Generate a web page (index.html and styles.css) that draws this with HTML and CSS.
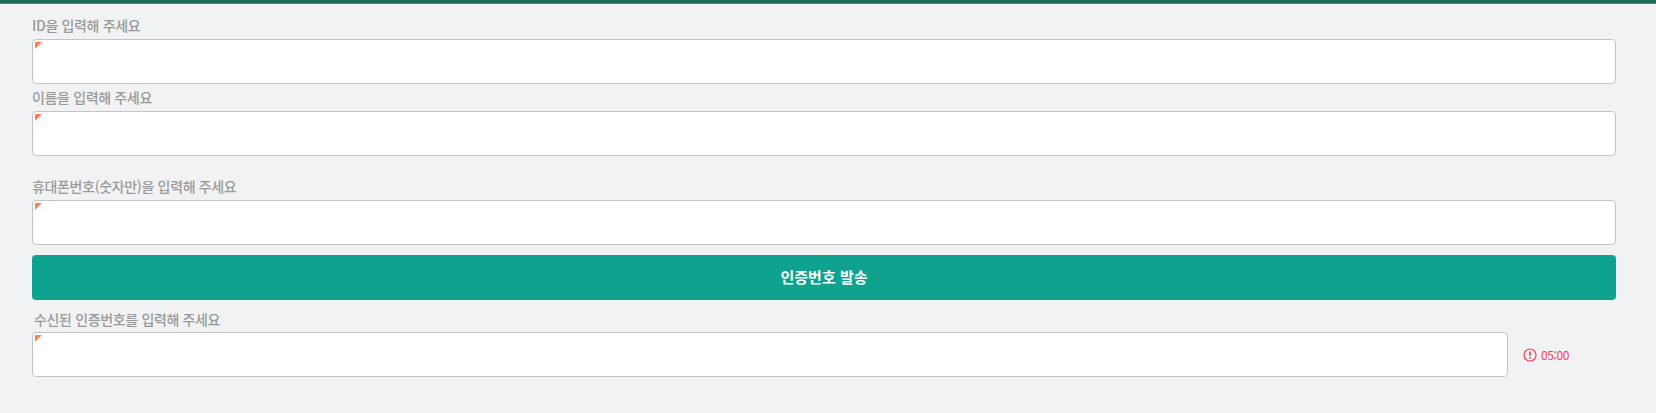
FILE: index.html
```html
<!DOCTYPE html>
<html lang="ko">
<head>
    <meta charset="UTF-8">
    <meta name="viewport" content="width=device-width, initial-scale=1.0">
    <title>인증번호 발송</title>
    <link rel="stylesheet" href="styles.css">
</head>
<body>
    <header class="top-bar"></header>
    <main class="form">
        <div class="field">
            <label class="field-label" for="user-id">ID을 입력해 주세요</label>
            <div class="input-box"><input type="text" id="user-id"></div>
        </div>
        <div class="field">
            <label class="field-label" for="user-name">이름을 입력해 주세요</label>
            <div class="input-box"><input type="text" id="user-name"></div>
        </div>
        <div class="field field-phone">
            <label class="field-label" for="user-phone">휴대폰번호(숫자만)을 입력해 주세요</label>
            <div class="input-box"><input type="text" id="user-phone"></div>
        </div>
        <button type="button" class="send-button">인증번호 발송</button>
        <div class="field">
            <label class="field-label field-label-code" for="user-code">수신된 인증번호를 입력해 주세요</label>
            <div class="code-row">
                <div class="input-box"><input type="text" id="user-code"></div>
                <div class="timer">
                    <svg class="timer-icon" viewBox="0 0 14 14" aria-hidden="true">
                        <circle cx="7" cy="7" r="6" fill="none" stroke="currentColor" stroke-width="1.2"/>
                        <path d="M7 3.6v4.2" fill="none" stroke="currentColor" stroke-width="1.7"/>
                        <path d="M7 9.1v1.5" fill="none" stroke="currentColor" stroke-width="1.7"/>
                    </svg>
                    <span>05:00</span>
                </div>
            </div>
        </div>
    </main>
</body>
</html>
```

FILE: styles.css
```css
body {
    font-family: "Noto Sans CJK KR", "Noto Sans", sans-serif;
    background-color: #f1f2f4;
    margin: 0;
    padding: 0;
}
.top-bar {
    height: 3px;
    background-color: #1f6b57;
    border-bottom: 1px solid #4d8a79;
}
.form {
    display: flex;
    flex-direction: column;
    padding: 10px 40px 0 32px;
}
.field-phone {
    margin-top: 17px;
}
.field-label {
    display: block;
    height: 25px;
    line-height: 22px;
    box-sizing: border-box;
    font-size: 14px;
    font-weight: 500;
    letter-spacing: -0.35px;
    color: #999999;
}
.field-label-code {
    padding-left: 2px;
}
.field + .field .field-label {
    height: 27px;
    padding-top: 2px;
}
.input-box {
    position: relative;
    flex: 1;
}
.input-box::before {
    content: "";
    position: absolute;
    top: 3px;
    left: 3px;
    border-top: 7px solid #ff7f50;
    border-right: 7px solid transparent;
}
.input-box input {
    display: block;
    width: 100%;
    height: 45px;
    box-sizing: border-box;
    border: 1px solid #c4c4c4;
    border-radius: 4px;
    background-color: #ffffff;
    outline: none;
}
.send-button {
    height: 45px;
    margin-top: 10px;
    padding-bottom: 3px;
    border: none;
    border-radius: 4px;
    background-color: #0fa38f;
    color: #ffffff;
    font-family: inherit;
    font-size: 15px;
    font-weight: 700;
    cursor: pointer;
}
.send-button + .field .field-label {
    height: 32px;
    padding-top: 8px;
}
.code-row {
    display: flex;
    align-items: center;
}
.timer {
    width: 108px;
    display: flex;
    align-items: center;
    gap: 4px;
    padding-left: 15px;
    box-sizing: border-box;
    color: #ff3b4e;
    font-size: 12px;
    letter-spacing: -0.4px;
}
.timer-icon {
    width: 14px;
    height: 14px;
}
```
